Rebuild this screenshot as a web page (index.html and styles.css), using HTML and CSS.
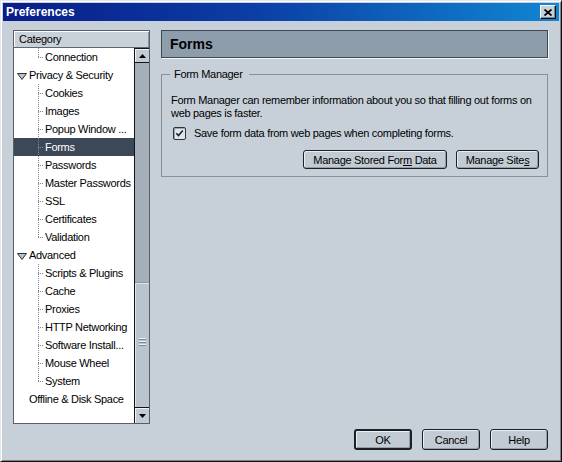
FILE: index.html
```html
<!DOCTYPE html>
<html lang="en">
<head>
<meta charset="utf-8">
<title>Preferences</title>
<link rel="stylesheet" href="styles.css">
</head>
<body>
<div class="window">
  <div class="titlebar">
    <span class="title">Preferences</span>
    <span class="close" aria-label="Close">
      <svg width="8" height="7" viewBox="0 0 8 7"><path d="M0.5 0.5 L7.5 6.5 M7.5 0.5 L0.5 6.5" stroke="#000" stroke-width="1.7" fill="none"/></svg>
    </span>
  </div>
  <div class="main">
    <div class="tree">
      <div class="tree-head">Category</div>
      <div class="tree-body">
        <ul class="tree-list">
          <li class="row child last">Connection</li>
          <li class="row parent"><svg class="twisty" width="10" height="7" viewBox="0 0 10 7"><path d="M0.5 0.5 H9.5 L5 6.5 Z" fill="#b9c3cd" stroke="#2a3038"/></svg>Privacy &amp; Security</li>
          <li class="row child">Cookies</li>
          <li class="row child">Images</li>
          <li class="row child">Popup Window ...</li>
          <li class="row child selected">Forms</li>
          <li class="row child">Passwords</li>
          <li class="row child">Master Passwords</li>
          <li class="row child">SSL</li>
          <li class="row child">Certificates</li>
          <li class="row child last">Validation</li>
          <li class="row parent"><svg class="twisty" width="10" height="7" viewBox="0 0 10 7"><path d="M0.5 0.5 H9.5 L5 6.5 Z" fill="#b9c3cd" stroke="#2a3038"/></svg>Advanced</li>
          <li class="row child">Scripts &amp; Plugins</li>
          <li class="row child">Cache</li>
          <li class="row child">Proxies</li>
          <li class="row child">HTTP Networking</li>
          <li class="row child">Software Install...</li>
          <li class="row child">Mouse Wheel</li>
          <li class="row child last">System</li>
          <li class="row top">Offline &amp; Disk Space</li>
        </ul>
        <div class="scrollbar">
          <div class="sb-btn sb-up"><svg width="7" height="4" viewBox="0 0 7 4"><path d="M3.5 0 L7 4 H0 Z" fill="#000"/></svg></div>
          <div class="sb-track"></div>
          <div class="sb-thumb"><span class="grip"></span></div>
          <div class="sb-btn sb-down"><svg width="7" height="4" viewBox="0 0 7 4"><path d="M0 0 H7 L3.5 4 Z" fill="#000"/></svg></div>
        </div>
      </div>
    </div>
    <div class="content">
      <div class="panel-head">Forms</div>
      <fieldset class="group">
        <legend>Form Manager</legend>
        <p class="desc">Form Manager can remember information about you so that filling out forms on web pages is faster.</p>
        <label class="check-row">
          <span class="checkbox"><svg width="9" height="9" viewBox="0 0 9 9"><path d="M1.3 4.3 L3.5 6.6 L7.8 1.6" stroke="#1e242a" stroke-width="1.6" fill="none"/></svg></span>
          <span>Save form data from web pages when completing forms.</span>
        </label>
        <div class="btn-row">
          <button class="btn btn-stored">Manage Stored For<u>m</u> Data</button>
          <button class="btn btn-sites">Manage Site<u>s</u></button>
        </div>
      </fieldset>
    </div>
  </div>
  <div class="footer">
    <button class="btn btn-dlg btn-default">OK</button>
    <button class="btn btn-dlg">Cancel</button>
    <button class="btn btn-dlg">Help</button>
  </div>
</div>
</body>
</html>
```
FILE: styles.css
```css
* { box-sizing: border-box; }
html, body { margin: 0; padding: 0; }
body {
  width: 562px;
  height: 462px;
  overflow: hidden;
  font-family: "Liberation Sans", Arial, sans-serif;
  font-size: 11px;
  letter-spacing: -0.3px;
  color: #000;
  background: #c7d0d9;
}
.window {
  width: 562px;
  height: 462px;
  border: 1px solid;
  border-color: #e4e8ec #101214 #101214 #e4e8ec;
  box-shadow: inset 1px 1px 0 #ffffff, inset -1px -1px 0 #7a838c;
  padding: 2px;
  background: #c7d0d9;
  display: flex;
  flex-direction: column;
}
.titlebar {
  height: 18px;
  flex: none;
  display: flex;
  align-items: center;
  justify-content: space-between;
  padding: 0 3px;
  background: linear-gradient(to right, #0a1c88 0%, #0b3ea6 45%, #1186d2 100%);
}
.title {
  color: #fff;
  font-weight: bold;
  font-size: 12px;
  letter-spacing: 0;
}
.close {
  width: 16px;
  height: 14px;
  display: flex;
  align-items: center;
  justify-content: center;
  background: #c8d0d8;
  border: 1px solid;
  border-color: #ffffff #0c0e10 #0c0e10 #ffffff;
  box-shadow: inset -1px -1px 0 #7d868f;
}
.main {
  flex: none;
  height: 403px;
  display: flex;
  gap: 11px;
  padding: 9px 0 0 10px;
}
.tree {
  width: 137px;
  height: 394px;
  border: 1px solid #56606b;
  display: flex;
  flex-direction: column;
  background: #fff;
}
.tree-head {
  height: 17px;
  flex: none;
  border-bottom: 1px solid #5f6872;
  background: #c9d1d9;
  box-shadow: inset 1px 1px 0 #fff, inset -1px 0 0 #8a939c;
  padding-left: 5px;
  line-height: 16px;
}
.tree-body {
  flex: 1;
  display: flex;
  min-height: 0;
}
.tree-list {
  width: 120px;
  flex: none;
  list-style: none;
  margin: 0;
  padding: 0;
  overflow: hidden;
}
.row {
  height: 18px;
  line-height: 18px;
  white-space: nowrap;
  overflow: hidden;
}
.parent { padding-left: 3px; }
.twisty { vertical-align: -1px; margin-right: 2px; }
.top { padding-left: 15px; }
.child {
  padding-left: 31px;
  background-image:
    repeating-linear-gradient(to bottom, #7f8891 0 1px, transparent 1px 2px),
    repeating-linear-gradient(to right, #7f8891 0 1px, transparent 1px 2px);
  background-size: 1px 18px, 5px 1px;
  background-position: 24px 0, 24px 9px;
  background-repeat: no-repeat;
}
.child.last { background-size: 1px 10px, 5px 1px; }
.selected { background-color: #3c4858; color: #fff; }
.scrollbar {
  width: 15px;
  flex: none;
  border-left: 1px solid #111418;
  display: flex;
  flex-direction: column;
  background: #a5afb9;
}
.sb-btn {
  flex: none;
  display: flex;
  align-items: center;
  justify-content: center;
  background: #c2cbd4;
  box-shadow: inset 1px 1px 0 #eef2f6;
}
.sb-up { height: 15px; border-top: 1px solid #111418; border-bottom: 1px solid #111418; }
.sb-down { height: 16px; border-top: 1px solid #111418; }
.sb-track { height: 219px; flex: none; }
.sb-thumb {
  height: 125px;
  flex: none;
  background: #bac4cd;
  box-shadow: inset 1px 1px 0 #dde4ea;
  border-top: 1px solid #8d97a1;
  display: flex;
  align-items: center;
  justify-content: center;
}
.grip {
  width: 7px;
  height: 8px;
  margin-top: -6px;
  background: repeating-linear-gradient(to bottom, #eef2f6 0 1px, #7c8690 1px 2px, transparent 2px 3px);
}
.content {
  width: 387px;
  display: flex;
  flex-direction: column;
}
.panel-head {
  height: 28px;
  flex: none;
  border: 1px solid #3f4952;
  background: #8e9dac;
  box-shadow: 1px 1px 0 #f2f5f8;
  font-weight: bold;
  font-size: 14px;
  letter-spacing: 0;
  padding-left: 8px;
  line-height: 26px;
}
.group {
  margin: 10px 0 0 0;
  padding: 0 8px 7px 9px;
  border: 1px solid #88909a;
  min-width: 0;
}
.group legend {
  padding: 0 6px 0 4px;
  margin-left: -1px;
  line-height: 13px;
}
.desc {
  margin: 13px 0 0 0;
  line-height: 13px;
}
.check-row {
  display: flex;
  align-items: center;
  gap: 8px;
  height: 13px;
  margin-top: 7px;
  padding-left: 2px;
  line-height: 13px;
}
.checkbox {
  width: 13px;
  height: 13px;
  flex: none;
  border: 1px solid #2c343c;
  border-radius: 2px;
  background: #dfe5eb;
  box-shadow: inset 1px 1px 0 #9aa4ae;
  display: flex;
  align-items: center;
  justify-content: center;
}
.btn-row {
  display: flex;
  justify-content: flex-end;
  gap: 9px;
  margin-top: 10px;
}
.btn {
  height: 19px;
  border: 1px solid #1b2026;
  border-radius: 3px;
  background: #c2cbd4;
  box-shadow: inset 1px 1px 0 #eaeff4, inset -1px -1px 0 #949ea8;
  font: inherit;
  letter-spacing: inherit;
  color: #000;
  padding: 0;
  line-height: 16px;
}
.btn u { text-decoration: underline; }
.btn-stored { width: 144px; }
.btn-sites { width: 83px; }
.footer {
  flex: none;
  display: flex;
  justify-content: flex-end;
  gap: 10px;
  padding: 5px 11px 0 0;
}
.btn-dlg { width: 58px; height: 21px; }
.btn-default { border-width: 2px; }
```
